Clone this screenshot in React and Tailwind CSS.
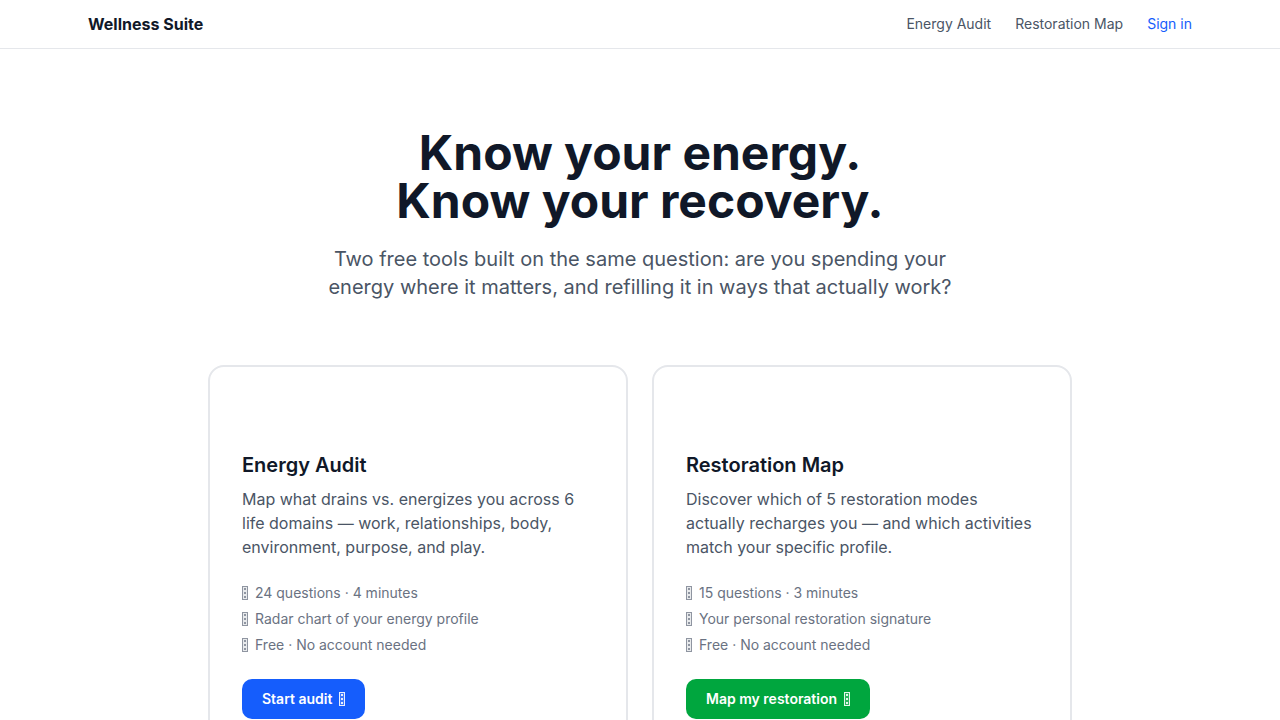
import React from "react";

// Small placeholder glyph box used as the bullet / arrow marker
function Glyph({ className = "" }) {
  return (
    <span
      className={`inline-flex h-[14px] w-[6px] flex-col items-center justify-around border border-current bg-current/20 opacity-75 ${className}`}
    >
      <span className="h-[2px] w-[2px] bg-current" />
      <span className="h-[2px] w-[2px] bg-current" />
      <span className="h-[2px] w-[2px] bg-current" />
    </span>
  );
}

function ToolCard({ title, desc, items, cta, btnClass }) {
  return (
    <div className="rounded-2xl border-2 border-gray-200 bg-white p-8">
      <div className="mb-3 h-10" />
      <h2 className="text-xl font-semibold leading-7 text-gray-900">{title}</h2>
      <p className="mt-2 text-base leading-6 text-gray-600">{desc}</p>
      <ul className="mt-6 flex flex-col gap-[6px] text-sm leading-5 text-gray-500">
        {items.map((t) => (
          <li key={t} className="flex items-center gap-[7px]">
            <Glyph />
            <span>{t}</span>
          </li>
        ))}
      </ul>
      <button
        className={`mt-6 inline-flex h-10 items-center gap-[7px] rounded-[10px] px-5 text-sm font-semibold text-white ${btnClass}`}
      >
        {cta}
        <Glyph className="opacity-90" />
      </button>
    </div>
  );
}

export default function App() {
  return (
    <div className="min-h-screen bg-white" style={{ fontFamily: "Inter, 'Noto Sans', sans-serif" }}>
      <header className="h-[49px] border-b border-gray-200">
        <div className="mx-auto flex h-full max-w-6xl items-center justify-between px-6">
          <span className="text-base font-bold text-gray-900">Wellness Suite</span>
          <nav className="flex items-center gap-6 text-sm text-gray-600">
            <a>Energy Audit</a>
            <a>Restoration Map</a>
            <a className="text-blue-600">Sign in</a>
          </nav>
        </div>
      </header>

      <main>
        <section className="mx-auto max-w-3xl px-4 pt-20 text-center">
          <h1 className="text-5xl font-bold leading-[48px] text-gray-900">
            Know your energy.
            <br />
            Know your recovery.
          </h1>
          <p className="mx-auto mt-5 max-w-[640px] text-xl leading-7 text-gray-600">
            Two free tools built on the same question: are you spending your energy where it
            matters, and refilling it in ways that actually work?
          </p>
        </section>

        <section className="mx-auto mt-16 grid max-w-4xl grid-cols-2 gap-6 px-4">
          <ToolCard
            title="Energy Audit"
            desc="Map what drains vs. energizes you across 6 life domains — work, relationships, body, environment, purpose, and play."
            items={["24 questions · 4 minutes", "Radar chart of your energy profile", "Free · No account needed"]}
            cta="Start audit"
            btnClass="bg-blue-600"
          />
          <ToolCard
            title="Restoration Map"
            desc="Discover which of 5 restoration modes actually recharges you — and which activities match your specific profile."
            items={["15 questions · 3 minutes", "Your personal restoration signature", "Free · No account needed"]}
            cta="Map my restoration"
            btnClass="bg-green-600"
          />
        </section>
      </main>
    </div>
  );
}
